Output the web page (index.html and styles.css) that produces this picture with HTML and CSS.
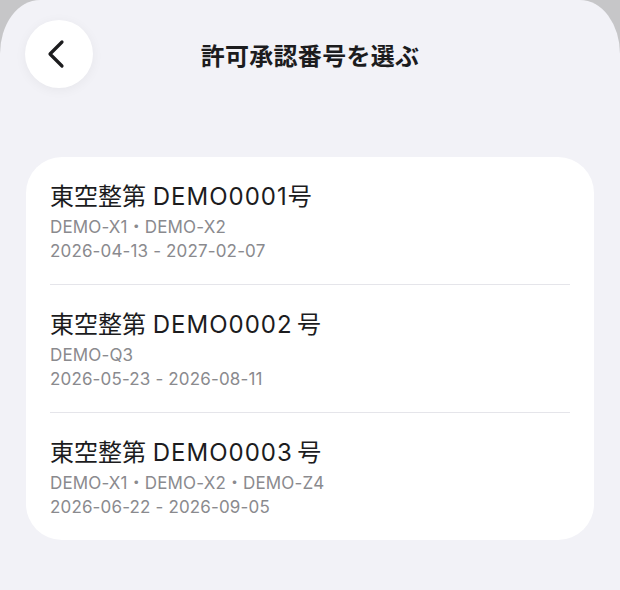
FILE: index.html
```html
<!DOCTYPE html>
<html lang="ja">
<head>
  <meta charset="UTF-8" />
  <meta name="viewport" content="width=device-width, initial-scale=1.0"/>
  <title>許可承認番号を選ぶ</title>
  <link rel="stylesheet" href="styles.css">
</head>
<body>

<div class="sheet">
  <div class="cabecera">
    <button class="boton-atras" aria-label="戻る">
      <svg width="20" height="32" viewBox="0 0 20 32">
        <path d="M15 4 L3 16 L15 28" fill="none" stroke="#1c1c1e" stroke-width="3.2" stroke-linecap="round" stroke-linejoin="round"/>
      </svg>
    </button>
    <h1 class="titulo">許可承認番号を選ぶ</h1>
    <span></span>
  </div>

  <div class="tarjeta">
    <div class="item">
      <div class="item-titulo">東空整第 <span class="latin">DEMO0001</span>号</div>
      <div class="item-sub">DEMO-X1<span class="punto">・</span>DEMO-X2</div>
      <div class="item-sub">2026-04-13 - 2027-02-07</div>
    </div>
    <div class="item">
      <div class="item-titulo">東空整第 <span class="latin">DEMO0002</span>&thinsp;号</div>
      <div class="item-sub">DEMO-Q3</div>
      <div class="item-sub">2026-05-23 - 2026-08-11</div>
    </div>
    <div class="item">
      <div class="item-titulo">東空整第 <span class="latin">DEMO0003</span>&thinsp;号</div>
      <div class="item-sub">DEMO-X1<span class="punto">・</span>DEMO-X2<span class="punto">・</span>DEMO-Z4</div>
      <div class="item-sub">2026-06-22 - 2026-09-05</div>
    </div>
  </div>
</div>

</body>
</html>
```

FILE: styles.css
```css
body {
  margin: 0;
  padding: 0;
  background-color: #c6c6c8;
  font-family: Inter, "Noto Sans CJK JP", sans-serif;
}

.sheet {
  min-height: 590px;
  background-color: #f2f2f7;
  border-radius: 40px 40px 0 0 / 54px 54px 0 0;
  overflow: hidden;
}

.cabecera {
  display: grid;
  grid-template-columns: 68px 1fr 68px;
  align-items: center;
  padding: 20px 25px 0;
}

.boton-atras {
  width: 68px;
  height: 68px;
  border: none;
  border-radius: 50%;
  background-color: #ffffff;
  box-shadow: 0 2px 12px rgba(0, 0, 0, 0.05);
  display: flex;
  align-items: center;
  justify-content: center;
  padding: 0 4px 0 0;
  cursor: pointer;
}

.titulo {
  margin: 0;
  text-align: center;
  font-size: 24px;
  letter-spacing: 0.3px;
  font-weight: 700;
  color: #1c1c1e;
}

.tarjeta {
  margin: 69px 26px 0;
  padding: 0 24px;
  background-color: #ffffff;
  border-radius: 36px;
}

.item {
  padding: 26px 0 21px;
  border-bottom: 1px solid #e5e5ea;
}

.item:last-child {
  border-bottom: none;
}

.item-titulo {
  font-size: 24px;
  line-height: 28px;
  color: #1c1c1e;
  margin-bottom: 4px;
}

.item-titulo .latin {
  letter-spacing: 1px;
}

.item-sub {
  font-size: 17px;
  letter-spacing: 0.15px;
  line-height: 24px;
  height: 24px;
  color: #8a8a8e;
}

.punto {
  font-family: "Noto Sans CJK JP", sans-serif;
  line-height: 1;
}
```
